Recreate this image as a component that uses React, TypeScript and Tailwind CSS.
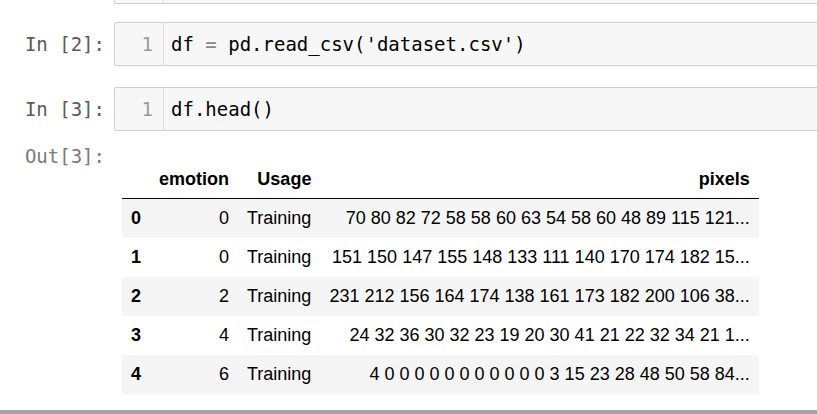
import React from "react";

const mono = { fontFamily: '"DejaVu Sans Mono", "Liberation Mono", monospace' };

const rows = [
  ["0", "0", "Training", "70 80 82 72 58 58 60 63 54 58 60 48 89 115 121..."],
  ["1", "0", "Training", "151 150 147 155 148 133 111 140 170 174 182 15..."],
  ["2", "2", "Training", "231 212 156 164 174 138 161 173 182 200 106 38..."],
  ["3", "4", "Training", "24 32 36 30 32 23 19 20 30 41 21 22 32 34 21 1..."],
  ["4", "6", "Training", "4 0 0 0 0 0 0 0 0 0 0 0 3 15 23 28 48 50 58 84..."],
];

function CodeCell({ prompt, children }: { prompt: string; children: React.ReactNode }) {
  return (
    <div className="flex h-[44px]">
      <div
        className="w-[114px] shrink-0 flex items-center justify-end pr-[9px] text-[19px] leading-[22px] text-[#5a5a5a]"
        style={mono}
      >
        {prompt}
      </div>
      <div className="flex-1 -mr-[6px] flex border border-[#cfcfcf] rounded-[2px] bg-[#f7f7f7]">
        <div
          className="w-[49px] shrink-0 border-r border-[#dddddd] flex items-center justify-end pr-[10px] text-[19px] leading-[22px] text-[#999999]"
          style={mono}
        >
          1
        </div>
        <div className="flex items-center pl-[7px] text-[19px] leading-[22px] text-black whitespace-pre" style={mono}>
          {children}
        </div>
      </div>
    </div>
  );
}

export default function App() {
  return (
    <div className="w-[817px] h-[414px] overflow-hidden bg-white relative flex flex-col">
      {/* previous cell fragment */}
      <div className="flex h-[4px]">
        <div className="w-[114px] shrink-0" />
        <div className="flex-1 -mr-[6px] flex border-b border-l border-[#cfcfcf] rounded-bl-[2px] bg-[#f7f7f7]">
          <div className="w-[49px] shrink-0 border-r border-[#dddddd]" />
        </div>
      </div>

      <div className="mt-[18px]">
        <CodeCell prompt="In [2]:">
          <span>df </span>
          <span className="text-[#888888]">=</span>
          <span> pd.read_csv(&apos;dataset.csv&apos;)</span>
        </CodeCell>
      </div>

      <div className="mt-[21px]">
        <CodeCell prompt="In [3]:">
          <span>df.head()</span>
        </CodeCell>
      </div>

      <div className="flex">
        <div
          className="w-[114px] shrink-0 pt-[14px] pr-[9px] text-right text-[19px] leading-[22px] text-[#7a7a7a]"
          style={mono}
        >
          Out[3]:
        </div>
        <div className="pl-[8px] pt-[29px]">
          <table
            className="text-[18px] text-black"
            style={{ fontFamily: '"Liberation Sans", Arial, sans-serif' }}
          >
            <thead>
              <tr>
                <th className="px-[9px] pt-[9px] pb-[8px] leading-[21px] border-b border-black"></th>
                <th className="px-[9px] pt-[9px] pb-[8px] leading-[21px] text-right font-bold border-b border-black">emotion</th>
                <th className="px-[9px] pt-[9px] pb-[8px] leading-[21px] text-right font-bold border-b border-black">Usage</th>
                <th className="px-[9px] pt-[9px] pb-[8px] leading-[21px] text-right font-bold border-b border-black">pixels</th>
              </tr>
            </thead>
            <tbody>
              {rows.map((r, i) => (
                <tr key={r[0]} className={i % 2 === 0 ? "bg-[#f5f5f5]" : "bg-white"}>
                  <th className="px-[9px] py-[9px] leading-[21px] text-left font-bold">{r[0]}</th>
                  <td className="px-[9px] py-[9px] leading-[21px] text-right">{r[1]}</td>
                  <td className="px-[9px] py-[9px] leading-[21px] text-right">{r[2]}</td>
                  <td className="px-[9px] py-[9px] leading-[21px] text-right whitespace-nowrap">{r[3]}</td>
                </tr>
              ))}
            </tbody>
          </table>
        </div>
      </div>

      <div className="absolute left-0 right-0 bottom-0 h-[4px] bg-[#a4a4a4]" />
    </div>
  );
}
